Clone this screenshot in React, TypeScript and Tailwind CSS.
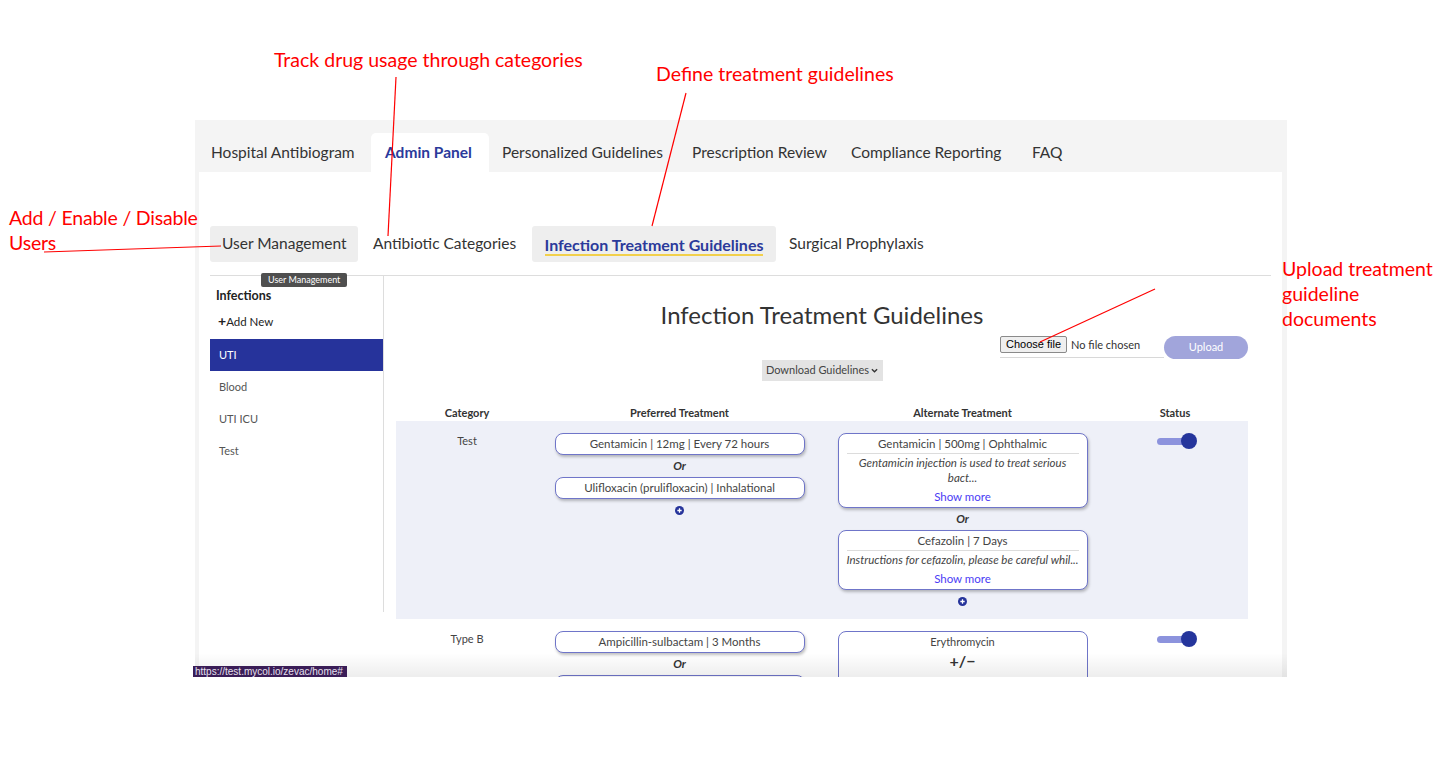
import React from 'react';

const ui = "font-['Lato','Noto_Sans',sans-serif]";

const mainTabs = [
  { label: 'Hospital Antibiogram', w: 'w-[173px]' },
  { label: 'Admin Panel', w: 'w-[118px]' },
  { label: 'Personalized Guidelines', w: 'w-[190px]' },
  { label: 'Prescription Review', w: 'w-[159px]' },
  { label: 'Compliance Reporting', w: 'w-[181px]' },
  { label: 'FAQ', w: 'w-[60px]' },
];
const infections = ['UTI', 'Blood', 'UTI ICU', 'Test'];

function PlusDot() {
  return (
    <svg width="9" height="9" viewBox="0 0 10 10" className="block">
      <circle cx="5" cy="5" r="5" fill="#26349b" />
      <path d="M5 2.6v4.8M2.6 5h4.8" stroke="#fff" strokeWidth="1.4" />
    </svg>
  );
}

function Toggle() {
  return (
    <div className="relative flex h-[16px] w-[40px] items-center">
      <div className="h-[7px] w-[32px] rounded-full bg-[#8c93dd]" />
      <div className="absolute right-0 top-0 h-[16px] w-[16px] rounded-full bg-[#25359c]" />
    </div>
  );
}

function Pill({ children }: { children?: React.ReactNode }) {
  return (
    <div className="flex h-[22px] w-[250px] items-center justify-center rounded-[8px] border-[1.5px] border-[#6f75c9] bg-white text-[11.5px] text-[#444] shadow-[1px_2px_3px_rgba(0,0,0,0.25)]">
      {children}
    </div>
  );
}

function NoteCard({ title, note }: { title: string; note: React.ReactNode }) {
  return (
    <div className="w-[250px] rounded-[8px] border-[1.5px] border-[#6f75c9] bg-white pb-[2px] text-center text-[11.5px] text-[#444] shadow-[1px_2px_3px_rgba(0,0,0,0.25)]">
      <div className="pt-[1px] leading-[18px]">{title}</div>
      <div className="mx-[8px] border-t border-[#dcdcdc]" />
      <div className="pt-[1px] italic leading-[15px]">{note}</div>
      <div className="mt-[4px] leading-[16px] text-[#4b3cf5]">Show more</div>
    </div>
  );
}

function Or() {
  return <div className="text-[11.5px] font-bold italic leading-[22px] text-[#333]">Or</div>;
}

function Screenshot() {
  return (
    <div className={`${ui} relative flex h-[557px] w-[1092px] flex-col overflow-hidden bg-[#f4f4f4]`}>
      <nav className="flex h-[52px] items-stretch pl-[3px] pt-[13px]">
        {mainTabs.map((t) => (
          <div
            key={t.label}
            className={
              t.label === 'Admin Panel'
                ? `${t.w} rounded-t-[5px] bg-white pl-[14px] text-[15.5px] font-bold leading-[39px] text-[#2b3a9b]`
                : `${t.w} pl-[13px] text-[15.5px] leading-[39px] text-[#333]`
            }
          >
            {t.label}
          </div>
        ))}
      </nav>

      <div className="ml-[4px] mr-[5px] flex-1 bg-white px-[11px] pt-[54px]">
        <div className="flex h-[36px] items-stretch text-[15.5px] text-[#333]">
          <div className="flex w-[148px] items-center rounded-[3px] bg-[#eeeeee] pl-[12px]">User Management</div>
          <div className="ml-[5px] flex w-[165px] items-center pl-[10px]">Antibiotic Categories</div>
          <div className="ml-[4px] flex w-[244px] items-center justify-center rounded-[3px] bg-[#eeeeee]">
            <span className="mt-[3px] border-b-2 border-[#f2d04b] text-[16px] font-bold leading-[18px] text-[#2b3a9b]">Infection Treatment Guidelines</span>
          </div>
          <div className="ml-[13px] flex items-center">Surgical Prophylaxis</div>
        </div>

        <div className="mt-[13px] flex border-t border-[#dddddd]">
          <aside className="h-[336px] w-[174px] shrink-0 border-r border-[#dddddd] pt-[12px]">
            <div className="pl-[6px] text-[12.5px] font-bold leading-[16px] text-[#222]">Infections</div>
            <div className="mt-[9px] pl-[8px] text-[11.5px] leading-[16px] text-[#222]">
              <span className="text-[14px] font-bold">+</span>Add New
            </div>
            <div className="mt-[9px]">
              {infections.map((i) => (
                <div
                  key={i}
                  className={
                    i === 'UTI'
                      ? 'flex h-[32px] items-center bg-[#26339b] pl-[9px] text-[11px] text-white'
                      : 'flex h-[32px] items-center pl-[9px] text-[11px] text-[#555]'
                  }
                >
                  {i}
                </div>
              ))}
            </div>
          </aside>

          <main className="flex-1 pl-[12px] pr-[23px] pt-[25px]">
            <h1 className="text-center text-[24px] leading-[28px] text-[#333]">Infection Treatment Guidelines</h1>

            <div className="mt-[7px] flex h-[23px] justify-end">
              <div className="flex h-[22px] w-[164px] items-start border-b border-[#d8d8d8]">
                <div className="flex h-[17px] items-center rounded-[2px] border border-[#8a8a8a] bg-[#efefef] px-[5px] font-['Liberation_Sans',sans-serif] text-[11px] text-black">
                  Choose file
                </div>
                <div className="ml-[4px] text-[11px] leading-[17px] text-[#333]">No file chosen</div>
              </div>
              <div className="flex h-[23px] w-[84px] items-center justify-center rounded-full bg-[#a1a5db] text-[11px] text-white">Upload</div>
            </div>

            <div className="mt-[1px] flex justify-center">
              <div className="flex h-[21px] w-[121px] items-center justify-center gap-[2px] bg-[#e3e3e3] text-[11px] text-[#444]">
                Download Guidelines
                <svg width="7" height="5" viewBox="0 0 8 5">
                  <path d="M1 1l3 3 3-3" stroke="#333" strokeWidth="1.5" fill="none" />
                </svg>
              </div>
            </div>

            <div className="mt-[23px] grid grid-cols-[142px_283px_283px_142px] text-center text-[11px] font-bold leading-[17px] text-[#333]">
              <div>Category</div>
              <div>Preferred Treatment</div>
              <div>Alternate Treatment</div>
              <div>Status</div>
            </div>

            <div className="grid grid-cols-[142px_283px_283px_142px] bg-[#eef0f8] pb-[13px] pt-[12px]">
              <div className="pt-[2px] text-center text-[11px] leading-[12px] text-[#444]">Test</div>
              <div className="flex flex-col items-center">
                <Pill>Gentamicin | 12mg | Every 72 hours</Pill>
                <Or />
                <Pill>Ulifloxacin (prulifloxacin) | Inhalational</Pill>
                <div className="mt-[7px]">
                  <PlusDot />
                </div>
              </div>
              <div className="flex flex-col items-center">
                <NoteCard
                  title="Gentamicin | 500mg | Ophthalmic"
                  note={
                    <>
                      Gentamicin injection is used to treat serious
                      <br />
                      bact...
                    </>
                  }
                />
                <Or />
                <NoteCard title="Cefazolin | 7 Days" note="Instructions for cefazolin, please be careful whil..." />
                <div className="mt-[7px]">
                  <PlusDot />
                </div>
              </div>
              <div className="flex justify-center pl-[4px]">
                <Toggle />
              </div>
            </div>

            <div className="grid grid-cols-[142px_283px_283px_142px] pt-[12px]">
              <div className="pt-[2px] text-center text-[11px] leading-[12px] text-[#444]">Type B</div>
              <div className="flex flex-col items-center">
                <Pill>Ampicillin-sulbactam | 3 Months</Pill>
                <Or />
                <Pill />
              </div>
              <div className="flex flex-col items-center">
                <div className="h-[70px] w-[250px] rounded-[8px] border-[1.5px] border-[#6f75c9] bg-white text-center text-[#444]">
                  <div className="pt-[1px] text-[11px] leading-[18px]">Erythromycin</div>
                  <div className="text-[16px] font-bold leading-[20px] text-[#333]">+/−</div>
                </div>
              </div>
              <div className="flex justify-center pl-[4px]">
                <Toggle />
              </div>
            </div>
          </main>
        </div>
      </div>

      <div className="pointer-events-none absolute bottom-0 left-0 h-[24px] w-full bg-gradient-to-b from-transparent to-black/[0.07]" />
      <div className="pointer-events-none absolute left-[66px] top-[153px] h-[14px] rounded-[2px] bg-[#4f4f4f] px-[7px] text-[9px] leading-[14px] text-white">User Management</div>
    </div>
  );
}

function Annotations() {
  const note = "absolute font-['Lato',sans-serif] text-[19.5px] leading-[25px] text-[#ff0000]";
  return (
    <>
      <div className={`${note} left-[274px] top-[47px]`}>Track drug usage through categories</div>
      <div className={`${note} left-[656px] top-[61px]`}>Define treatment guidelines</div>
      <div className={`${note} left-[9px] top-[205px] tracking-[-0.2px]`}>
        Add / Enable / Disable
        <br />
        Users
      </div>
      <div className={`${note} left-[1282px] top-[256px]`}>
        Upload treatment
        <br />
        guideline
        <br />
        documents
      </div>
      <svg className="pointer-events-none absolute left-0 top-0" width="1437" height="757">
        <g stroke="#ff0000" strokeWidth="1.2" fill="none">
          <line x1="396" y1="77" x2="388" y2="236" />
          <line x1="686" y1="93" x2="652" y2="226" />
          <line x1="44" y1="252" x2="221" y2="246" />
          <line x1="1155" y1="289" x2="1040" y2="342" />
        </g>
      </svg>
      <div className="absolute left-[193px] top-[666px] h-[11px] bg-[#3a1d57] pl-[2px] pr-[4px] font-['Liberation_Sans',sans-serif] text-[10px] leading-[11px] text-[#e6e0ee]">
        https://test.mycol.io/zevac/home#
      </div>
    </>
  );
}

export default function App() {
  return (
    <div className="relative h-[757px] w-[1437px] overflow-hidden bg-white">
      <div className="pl-[195px] pt-[120px]">
        <Screenshot />
      </div>
      <Annotations />
    </div>
  );
}
